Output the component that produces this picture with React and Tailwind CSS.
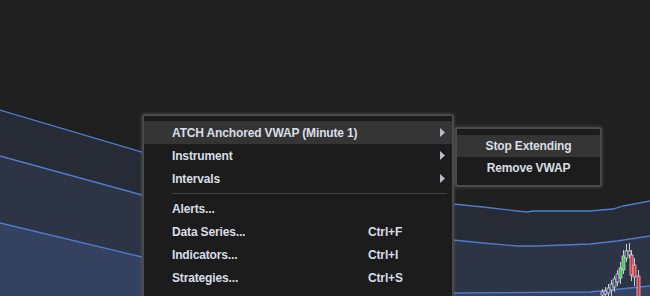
const line1 = "0,110 142,152 300,183 453,204 483,207 517,211 527,212 533,211 590,211 613,209 623,206 650,201";
const line2 = "0,156 142,195 300,222 453,240 483,243 517,246 537,246 590,244 617,241 650,236";
const line3 = "0,223 142,257 300,280 453,293 590,292 620,289 650,286";

const candles = [
  { x: 602, hi: 289, lo: 297, o: 292, c: 295, col: "gray" },
  { x: 605, hi: 287, lo: 297, o: 291, c: 294, col: "gray" },
  { x: 608, hi: 284, lo: 297, o: 288, c: 293, col: "gray" },
  { x: 611, hi: 280, lo: 296, o: 284, c: 290, col: "gray" },
  { x: 614, hi: 276, lo: 292, o: 279, c: 287, col: "gray" },
  { x: 617, hi: 270, lo: 286, o: 274, c: 282, col: "gray" },
  { x: 620, hi: 262, lo: 284, o: 278, c: 268, col: "green" },
  { x: 623, hi: 250, lo: 274, o: 270, c: 256, col: "green" },
  { x: 626, hi: 244, lo: 262, o: 258, c: 251, col: "gray" },
  { x: 629, hi: 243, lo: 258, o: 251, c: 255, col: "gray" },
  { x: 631, hi: 250, lo: 281, o: 255, c: 275, col: "red" },
  { x: 634, hi: 258, lo: 286, o: 265, c: 277, col: "red" },
  { x: 638, hi: 270, lo: 297, o: 276, c: 297, col: "red" },
];

function Chart() {
  return (
    <svg className="absolute inset-0" width="650" height="296" viewBox="0 0 650 296">
      <polygon points={`${line1} 650,296 0,296`} fill="#262b36" />
      <polygon points={`${line2} 650,296 0,296`} fill="#2c3445" />
      <polygon points={`${line3} 650,296 0,296`} fill="#344260" />
      {[line1, line2, line3].map((p, i) => (
        <polyline key={i} points={p} fill="none" stroke="#4f7ccc" strokeWidth="1.3" />
      ))}
      {candles.map((k, i) => {
        const top = Math.min(k.o, k.c);
        const h = Math.max(Math.abs(k.o - k.c), 1);
        const fill = k.col === "green" ? "#3ecf4f" : k.col === "red" ? "#e0303a" : "#3a4863";
        return (
          <g key={i}>
            <line x1={k.x + 0.5} x2={k.x + 0.5} y1={k.hi} y2={k.lo} stroke="#c8ccd6" strokeWidth="1" />
            <rect x={k.x - 1} y={top} width="3" height={h} fill={fill} stroke="#c8ccd6" strokeWidth="0.8" />
          </g>
        );
      })}
    </svg>
  );
}

function Arrow() {
  return (
    <svg width="5" height="9" viewBox="0 0 5 9">
      <polygon points="0,0 5,4.5 0,9" fill="#b8bcc4" />
    </svg>
  );
}

function Row({ label, shortcut, sub, active }) {
  return (
    <div className={`flex items-center h-[23px] pl-[28px] pr-[7px] ${active ? "bg-[#353535]" : ""}`}>
      <span className="w-[196px] whitespace-nowrap">{label}</span>
      <span className="flex-1 whitespace-nowrap">{shortcut}</span>
      {sub && <Arrow />}
    </div>
  );
}

export default function App() {
  return (
    <div
      className="relative w-[650px] h-[296px] overflow-hidden bg-[#202020] text-[12px] font-bold tracking-[-0.15px] text-[#d9dee6]"
      style={{ fontFamily: '"Liberation Sans", Arial, sans-serif' }}
    >
      <Chart />

      <div className="absolute left-[142px] top-[114px] w-[312px] h-[200px] rounded-[3px] border-2 border-[#4b4b4b] bg-[#1c1c1c] pt-[5px] shadow-[0_0_3px_1px_rgba(110,110,110,0.35)]">
        <Row label="ATCH Anchored VWAP (Minute 1)" sub active />
        <Row label="Instrument" sub />
        <Row label="Intervals" sub />
        <div className="h-[7px] flex items-center pl-[28px] pr-[5px]">
          <div className="h-px w-full bg-[#424242]" />
        </div>
        <Row label="Alerts..." />
        <Row label="Data Series..." shortcut="Ctrl+F" />
        <Row label="Indicators..." shortcut="Ctrl+I" />
        <Row label="Strategies..." shortcut="Ctrl+S" />
      </div>

      <div className="absolute left-[455px] top-[127px] w-[147px] rounded-[3px] border-2 border-[#4b4b4b] bg-[#1c1c1c] py-[6px] shadow-[0_0_3px_1px_rgba(110,110,110,0.35)]">
        <div className="h-[22px] flex items-center justify-center bg-[#353535]">Stop Extending</div>
        <div className="h-[22px] flex items-center justify-center">Remove VWAP</div>
      </div>
    </div>
  );
}
